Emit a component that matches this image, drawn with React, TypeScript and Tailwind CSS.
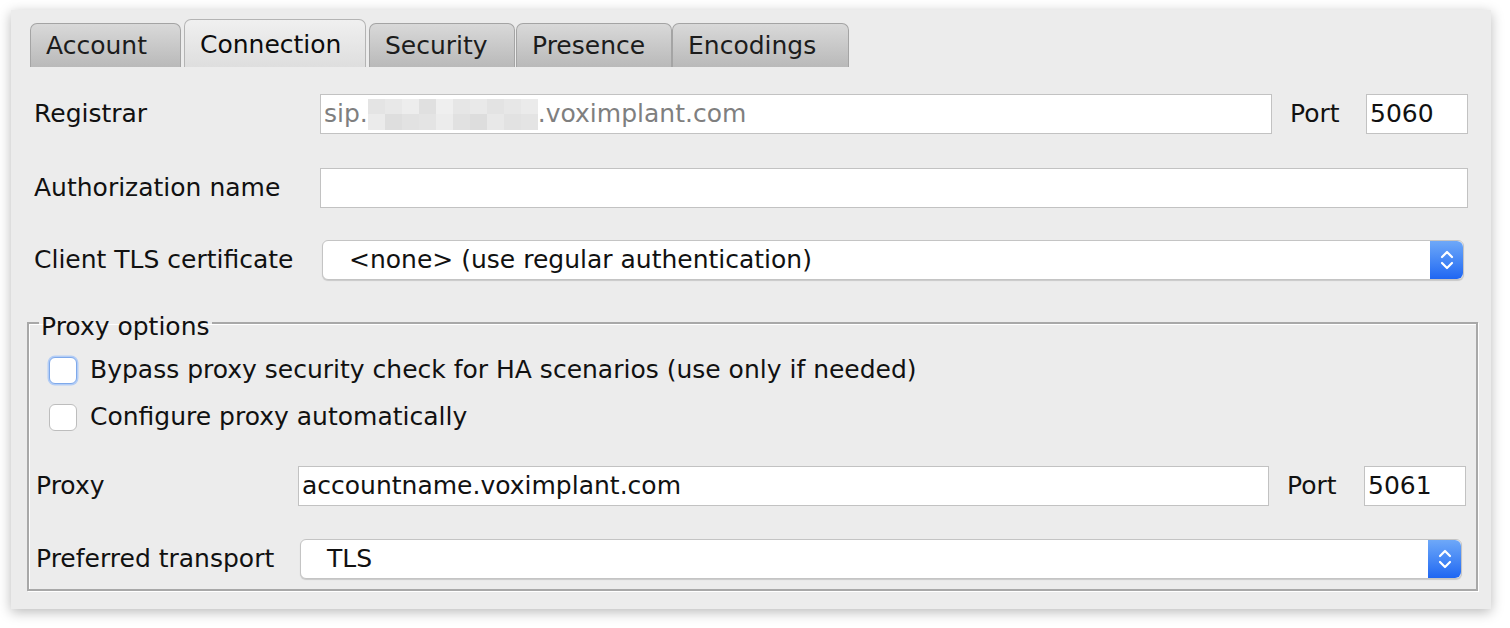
import React from 'react'

const font = { fontFamily: '"DejaVu Sans", Verdana, sans-serif' }

const tabs = ['Account', 'Connection', 'Security', 'Presence', 'Encodings']
const tabWidths = ['w-[151px]', 'w-[182px]', 'w-[146px]', 'w-[156px]', 'w-[177px]']
const tabGaps = ['ml-0', 'ml-[3px]', 'ml-[3px]', 'ml-[1px]', 'ml-0']

// pixelated blur cells for the hidden account name
const blurCells = [
  '#e4e4e4', '#e8e8e8', '#ededed', '#e0e0e0', '#efefef', '#e6e6e6', '#e9e9e9', '#e3e3e3', '#e7e7e7', '#ebebeb',
  '#ebebeb', '#dedede', '#e2e2e2', '#e4e4e4', '#ececec', '#e1e1e1', '#dddddd', '#e8e8e8', '#e2e2e2', '#e4e4e4',
]

const Stepper = () => (
  <div className="w-[33px] self-stretch rounded-r-[6px] bg-gradient-to-b from-[#6ea8f8] to-[#1f66f2] flex items-center justify-center">
    <svg width="16" height="24" viewBox="0 0 16 24" fill="none" stroke="#fff" strokeWidth="2.2" strokeLinecap="round" strokeLinejoin="round">
      <path d="M3 9 L8 4 L13 9" />
      <path d="M3 15 L8 20 L13 15" />
    </svg>
  </div>
)

const Select = ({ value, className }: { value: string; className: string }) => (
  <div className={`h-[40px] flex items-stretch bg-white rounded-[6px] border border-[#c4c4c4] shadow-[0_1px_1px_rgba(0,0,0,0.15)] ${className}`}>
    <div className="flex-1 flex items-center pl-[26px] text-[25px] text-[#111]">{value}</div>
    <Stepper />
  </div>
)

const TextInput = ({ children, className }: { children?: React.ReactNode; className: string }) => (
  <div className={`h-[40px] bg-white border border-[#c2c2c2] flex items-center text-[25px] ${className}`}>{children}</div>
)

const Checkbox = ({ focused }: { focused?: boolean }) => (
  <div
    className={`w-[28px] h-[27px] rounded-[6px] bg-white ${
      focused ? 'border border-[#7fa9ea] shadow-[0_0_0_1.5px_#b3cdf6]' : 'border border-[#bdbdbd]'
    }`}
  />
)

export default function App() {
  return (
    <div className="w-[1510px] h-[628px] bg-white pt-[10px] pl-[11px] leading-[30px]" style={font}>
      <div className="w-[1480px] h-[599px] bg-[#ececec] shadow-[0_3px_12px_rgba(0,0,0,0.28)] flex flex-col text-[#111]">
        {/* Tabs */}
        <div className="flex items-end h-[57px] pl-[19px]">
          {tabs.map((t, i) => {
            const sel = i === 1
            return (
              <div
                key={t}
                className={`${tabWidths[i]} ${tabGaps[i]} rounded-t-[7px] border border-b-0 flex items-center pl-[15px] text-[25px] ${
                  sel
                    ? 'h-[48px] pt-[3px] border-[#b4b4b4] bg-gradient-to-b from-[#f0f0f0] to-[#dedede] text-[#0c0c0c]'
                    : 'h-[44px] pt-[1px] border-[#a4a4a4] bg-gradient-to-b from-[#d9d9d9] to-[#b9b9b9] text-[#1c1c1c]'
                }`}
              >
                {t}
              </div>
            )
          })}
        </div>

        {/* Registrar */}
        <div className="flex items-center mt-[27px] pl-[23px] pr-[23px]">
          <div className="w-[286px] text-[25px]">Registrar</div>
          <TextInput className="flex-1 pl-[3px] text-[#7f7f7f]">
            <span>sip.</span>
            <span className="grid grid-cols-10 w-[170px] h-[31px]">
              {blurCells.map((c, i) => (
                <span key={i} style={{ background: c }} />
              ))}
            </span>
            <span>.voximplant.com</span>
          </TextInput>
          <div className="w-[94px] pl-[18px] text-[25px]">Port</div>
          <TextInput className="w-[102px] pl-[3px]">5060</TextInput>
        </div>

        {/* Authorization name */}
        <div className="flex items-center mt-[34px] pl-[23px] pr-[23px]">
          <div className="w-[286px] text-[25px]">Authorization name</div>
          <TextInput className="flex-1" />
        </div>

        {/* Client TLS certificate */}
        <div className="flex items-center mt-[32px] pl-[23px] pr-[27px]">
          <div className="w-[288px] text-[25px]">Client TLS certificate</div>
          <Select value="<none> (use regular authentication)" className="flex-1" />
        </div>

        {/* Proxy options */}
        <fieldset className="mt-[26px] ml-[16px] mr-[13px] h-[285px] border-2 border-[#a8a8a8] shadow-[inset_1px_1px_0_#fff,1px_1px_0_#fff] pl-[20px] pr-[10px]">
          <legend className="px-[2px] ml-[-10px] text-[25px] leading-[26px] pt-[8px]">Proxy options</legend>
          <div className="flex items-center gap-[13px] h-[30px] mt-[15px]">
            <Checkbox focused />
            <span className="text-[25px]">Bypass proxy security check for HA scenarios (use only if needed)</span>
          </div>
          <div className="flex items-center gap-[13px] h-[30px] mt-[17px]">
            <Checkbox />
            <span className="text-[25px]">Configure proxy automatically</span>
          </div>

          <div className="flex items-center mt-[34px] ml-[-13px]">
            <div className="w-[262px] text-[25px]">Proxy</div>
            <TextInput className="flex-1 pl-[3px]">accountname.voximplant.com</TextInput>
            <div className="w-[95px] pl-[18px] text-[25px]">Port</div>
            <TextInput className="w-[102px] pl-[3px]">5061</TextInput>
          </div>

          <div className="flex items-center mt-[33px] ml-[-13px] pr-[4px]">
            <div className="w-[264px] text-[25px]">Preferred transport</div>
            <Select value="TLS" className="flex-1" />
          </div>
        </fieldset>
      </div>
    </div>
  )
}
